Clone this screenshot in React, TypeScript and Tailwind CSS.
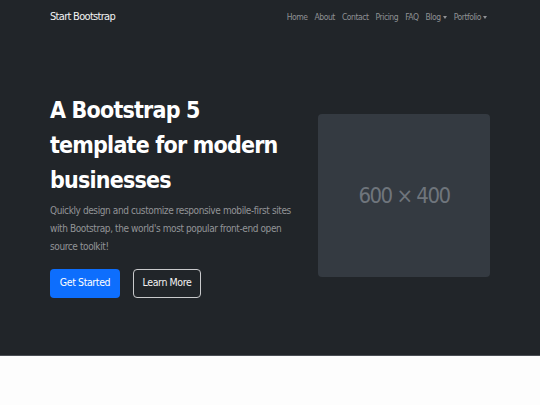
import React from "react";

const font = { fontFamily: '"DejaVu Sans Condensed", "DejaVu Sans", sans-serif' };

function Caret() {
  return <span className="ml-[2px] inline-block border-x-[2px] border-t-[3px] border-x-transparent border-t-current align-middle" />;
}

export default function App() {
  const links = ["Home", "About", "Contact", "Pricing", "FAQ"];
  return (
    <div className="min-h-[405px] bg-[#fdfdfd]" style={font}>
      <div className="bg-[#212529] border-b border-[#4a4e54]">
        <nav className="flex h-[35px] items-center justify-between pl-[50px] pr-[53px]">
          <span className="text-[11px] tracking-[-0.7px] text-[#f2f2f2]">Start Bootstrap</span>
          <div className="flex items-center gap-[7px] text-[8.5px] tracking-[-0.45px] text-[#8f9194]">
            {links.map((l) => (
              <span key={l}>{l}</span>
            ))}
            <span className="flex items-center">Blog<Caret /></span>
            <span className="flex items-center">Portfolio<Caret /></span>
          </div>
        </nav>
        <div className="flex h-[320px] items-center justify-between pl-[50px] pr-[50px]">
          <div className="w-[258px]">
            <h1 className="max-w-[245px] text-[23px] font-bold leading-[35px] tracking-[-0.8px] text-white">
              A Bootstrap 5 template for modern businesses
            </h1>
            <p className="mt-[4px] text-[10px] leading-[18px] tracking-[-0.4px] text-[#929497]">
              Quickly design and customize responsive mobile-first sites with Bootstrap, the world's most popular front-end open source toolkit!
            </p>
            <div className="mt-[13px] flex gap-[13px]">
              <button className="h-[29px] w-[70px] rounded-[4px] bg-[#0d6efd] text-[10.5px] tracking-[-0.4px] text-white">Get Started</button>
              <button className="h-[29px] w-[68px] rounded-[4px] border border-[#c9cacc] text-[10.5px] tracking-[-0.4px] text-[#f2f2f2]">Learn More</button>
            </div>
          </div>
          <div className="flex h-[163px] w-[172px] items-center justify-center rounded-[4px] bg-[#343a41] text-[22px] font-extralight tracking-[-1.5px] text-[#6f757c]">
            600 × 400
          </div>
        </div>
      </div>
    </div>
  );
}
